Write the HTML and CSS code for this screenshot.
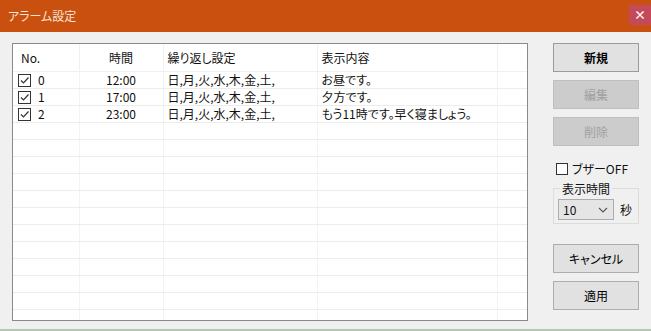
FILE: index.html
```html
<!DOCTYPE html>
<html lang="ja">
<head>
  <meta charset="UTF-8" />
  <title>アラーム設定</title>
  <link rel="stylesheet" href="styles.css">
</head>
<body>
  <div class="window">
    <!-- タイトルバー -->
    <div class="titlebar">
      <span class="title">アラーム設定</span>
      <span class="close">&times;</span>
    </div>

    <div class="content">
      <!-- アラーム一覧 -->
      <div class="listbox">
        <table class="alarms">
          <colgroup>
            <col class="c-no"><col class="c-time"><col class="c-repeat"><col class="c-msg"><col class="c-rest">
          </colgroup>
          <thead>
            <tr>
              <th class="left">No.</th>
              <th>時間</th>
              <th class="left">繰り返し設定</th>
              <th class="left">表示内容</th>
              <th></th>
            </tr>
          </thead>
          <tbody id="rows">
            <tr>
              <td><span class="chk"><svg width="11" height="11" viewBox="0 0 11 11"><path d="M2 5.5 L4.5 8 L9.5 2.5" fill="none" stroke="#333" stroke-width="1.2"/></svg></span><span class="num">0</span></td>
              <td class="center">12:00</td>
              <td>日,月,火,水,木,金,土,</td>
              <td>お昼です。</td>
              <td></td>
            </tr>
            <tr>
              <td><span class="chk"><svg width="11" height="11" viewBox="0 0 11 11"><path d="M2 5.5 L4.5 8 L9.5 2.5" fill="none" stroke="#333" stroke-width="1.2"/></svg></span><span class="num">1</span></td>
              <td class="center">17:00</td>
              <td>日,月,火,水,木,金,土,</td>
              <td>夕方です。</td>
              <td></td>
            </tr>
            <tr>
              <td><span class="chk"><svg width="11" height="11" viewBox="0 0 11 11"><path d="M2 5.5 L4.5 8 L9.5 2.5" fill="none" stroke="#333" stroke-width="1.2"/></svg></span><span class="num">2</span></td>
              <td class="center">23:00</td>
              <td>日,月,火,水,木,金,土,</td>
              <td>もう11時です。早く寝ましょう。</td>
              <td></td>
            </tr>
            <tr><td></td><td></td><td></td><td></td><td></td></tr>
            <tr><td></td><td></td><td></td><td></td><td></td></tr>
            <tr><td></td><td></td><td></td><td></td><td></td></tr>
            <tr><td></td><td></td><td></td><td></td><td></td></tr>
            <tr><td></td><td></td><td></td><td></td><td></td></tr>
            <tr><td></td><td></td><td></td><td></td><td></td></tr>
            <tr><td></td><td></td><td></td><td></td><td></td></tr>
            <tr><td></td><td></td><td></td><td></td><td></td></tr>
            <tr><td></td><td></td><td></td><td></td><td></td></tr>
            <tr><td></td><td></td><td></td><td></td><td></td></tr>
            <tr><td></td><td></td><td></td><td></td><td></td></tr>
            <tr><td></td><td></td><td></td><td></td><td></td></tr>
          </tbody>
        </table>
      </div>

      <!-- 操作パネル -->
      <div class="side">
        <button class="btn strong">新規</button>
        <button class="btn" disabled>編集</button>
        <button class="btn" disabled>削除</button>

        <label class="buzzer"><span class="box"></span>ブザーOFF</label>

        <fieldset class="group">
          <legend>表示時間</legend>
          <div class="combo-row">
            <div class="combo">
              <span>10</span>
              <svg width="10" height="6" viewBox="0 0 10 6"><path d="M1 1 L5 5 L9 1" fill="none" stroke="#555" stroke-width="1.1"/></svg>
            </div>
            <span class="unit">秒</span>
          </div>
        </fieldset>

        <button class="btn cancel">キャンセル</button>
        <button class="btn">適用</button>
      </div>
    </div>
  </div>
</body>
</html>
```

FILE: styles.css
```css
* {
  box-sizing: border-box;
}
body {
  margin: 0;
  font-family: "Noto Sans CJK JP", "Noto Sans", sans-serif;
  font-size: 12px;
  font-feature-settings: "palt";
  color: #111;
}
.window {
  width: 651px;
  height: 331px;
  background: #f0f0f0;
  border-bottom: 2px solid #b8c8b0;
  overflow: hidden;
}
.titlebar {
  height: 32px;
  background: #c9500f;
  display: flex;
  align-items: center;
  justify-content: space-between;
  padding-left: 8px;
}
.title {
  color: #f8e4d6;
  font-size: 12px;
  margin-top: -2px;
}
.close {
  width: 22px;
  height: 20px;
  margin-top: -2px;
  background: #c44a5a;
  color: #fff;
  font-size: 12px;
  line-height: 19px;
  text-align: center;
  font-weight: bold;
}
.content {
  display: flex;
  padding: 11px 0 0 12px;
}
.listbox {
  width: 516px;
  height: 278px;
  background: #fff;
  border: 1px solid #8a8a8a;
  overflow: hidden;
}
.alarms {
  border-collapse: collapse;
  table-layout: fixed;
  width: 514px;
}
.c-no { width: 66px; }
.c-time { width: 84px; }
.c-repeat { width: 154px; }
.c-msg { width: 180px; }
.c-rest { width: 30px; }
.alarms th {
  height: 27px;
  font-weight: normal;
  padding: 0 4px;
  border-left: 1px solid #f0f0f0;
  border-bottom: 1px solid #f0f0f0;
  text-align: center;
}
.alarms th:first-child {
  border-left: none;
  padding-left: 8px;
}
.alarms th.left {
  text-align: left;
}
.alarms td {
  height: 17px;
  padding: 0 4px;
  border-left: 1px solid #f3f3f3;
  border-bottom: 1px solid #ececec;
  white-space: nowrap;
  line-height: 16px;
}
.alarms td:first-child {
  border-left: none;
  padding-left: 5px;
}
.alarms td.center {
  text-align: center;
}
.chk {
  display: inline-block;
  width: 13px;
  height: 13px;
  border: 1px solid #333;
  vertical-align: -2px;
  margin-right: 7px;
}
.chk svg {
  display: block;
}
.side {
  width: 86px;
  margin-left: 25px;
  display: flex;
  flex-direction: column;
}
.btn {
  width: 86px;
  height: 29px;
  background: #e1e1e1;
  border: 1px solid #adadad;
  font-family: inherit;
  font-size: 12px;
  font-feature-settings: "palt";
  color: #000;
  padding: 0;
  margin-bottom: 8px;
}
.btn.strong {
  font-weight: bold;
  border-color: #9a9a9a;
}
.btn:disabled {
  background: #cccccc;
  border-color: #bfbfbf;
  color: #a0a0a0;
}
.buzzer {
  display: flex;
  align-items: center;
  margin: 6px 0 0 3px;
  font-size: 12px;
}
.buzzer .box {
  width: 12px;
  height: 12px;
  border: 1px solid #333;
  background: #fff;
  margin-right: 4px;
}
.group {
  margin: 3px 0 0 0;
  padding: 0 0 4px 4px;
  border: 1px solid #dcdcdc;
  height: 44px;
}
.group legend {
  padding: 0 2px;
  margin-left: 2px;
  font-size: 12px;
}
.combo-row {
  display: flex;
  align-items: center;
  margin-top: 2px;
}
.combo {
  width: 56px;
  height: 21px;
  background: #e5e5e5;
  border: 1px solid #acacac;
  display: flex;
  align-items: center;
  justify-content: space-between;
  padding: 0 5px 0 4px;
}
.unit {
  margin-left: 6px;
}
.btn.cancel {
  margin-top: 20px;
}
```
